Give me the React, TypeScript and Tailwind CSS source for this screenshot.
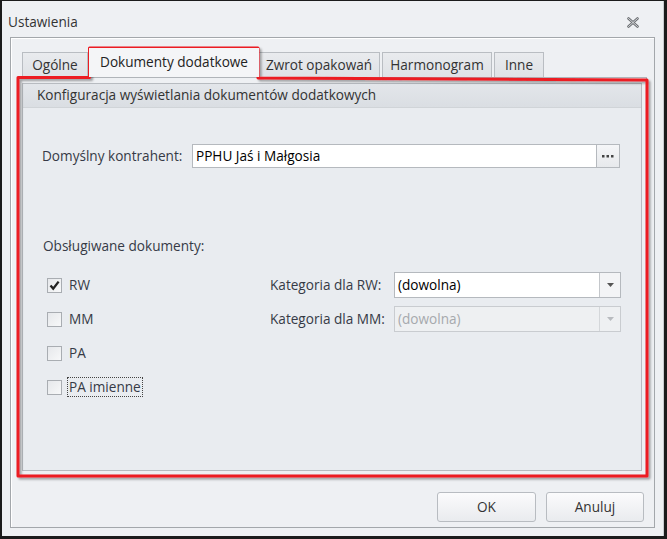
const FONT = { fontFamily: '"Open Sans", "Noto Sans", sans-serif' }

function Tab({ label, active, w }: { label: string; active?: boolean; w: string }) {
  if (active) {
    return (
      <div className={`${w} h-[29px] bg-[#f4f5f7] flex items-center justify-center text-[13.6px] text-[#222] -mx-[1px] z-10`}>
        {label}
      </div>
    )
  }
  return (
    <div className={`${w} h-[25px] mr-[2px] border border-b-0 border-[#b9bdc2] bg-gradient-to-b from-[#e9ebee] to-[#dfe2e6] flex items-center justify-center text-[13.6px] text-[#333]`}>
      {label}
    </div>
  )
}

function Check({ label, checked, focus }: { label: string; checked?: boolean; focus?: boolean }) {
  return (
    <div className="h-[34px] flex items-center pl-[24px]">
      <div className="w-[15px] h-[15px] border border-[#a9adb2] bg-gradient-to-br from-[#e6e8eb] to-[#f7f8f9] flex items-center justify-center">
        {checked && (
          <svg width="11" height="11" viewBox="0 0 11 11">
            <path d="M1.5 5.5 L4.2 8.6 L9.6 1.6" fill="none" stroke="#222" strokeWidth="2.3" />
          </svg>
        )}
      </div>
      <span className={`ml-[5px] text-[13.6px] text-[#363a46] leading-[18px] ${focus ? 'border border-dotted border-[#444] px-[1px]' : 'px-[2px]'}`}>
        {label}
      </span>
    </div>
  )
}

function Combo({ label, disabled }: { label: string; disabled?: boolean }) {
  return (
    <div className="h-[34px] flex items-center">
      <div className="w-[124px] text-[13.6px] text-[#363a46]">{label}</div>
      <div className={`w-[227px] h-[26px] border flex ${disabled ? 'border-[#c9ccd0] bg-[#eef0f2]' : 'border-[#b5b9be] bg-white'}`}>
        <div className={`flex-1 flex items-center pl-[3px] text-[13.6px] ${disabled ? 'text-[#a6a9ad]' : 'text-black'}`}>(dowolna)</div>
        <div className={`w-[21px] border-l flex items-center justify-center ${disabled ? 'border-[#d4d7da]' : 'border-[#c4c7cb] bg-[#f3f4f6]'}`}>
          <svg width="7" height="4" viewBox="0 0 7 4">
            <path d="M0 0 H7 L3.5 4 Z" fill={disabled ? '#b8bbbf' : '#555'} />
          </svg>
        </div>
      </div>
    </div>
  )
}

export default function App() {
  return (
    <div className="relative w-[667px] h-[539px] bg-[#1b1b1b] pt-[1px] pl-[2px] pr-[3px] pb-[3px]" style={FONT}>
      <div className="w-full h-full bg-[#eef0f3] border-r border-[#c8cbcf] flex flex-col">
        <div className="h-[36px] flex items-center justify-between pl-[6px] pr-[24px] pt-[6px]">
          <span className="text-[13.6px] text-[#333]">Ustawienia</span>
          <svg width="12" height="11" viewBox="0 0 12 11">
            <path d="M1.5 1.5 L10.5 9.5 M10.5 1.5 L1.5 9.5" stroke="#6b6e72" strokeWidth="2.6" strokeLinecap="round" />
            <path d="M1.5 1.5 L10.5 9.5 M10.5 1.5 L1.5 9.5" stroke="#eef0f3" strokeWidth="0.8" strokeLinecap="round" />
          </svg>
        </div>

        <div className="mx-[8px] mb-[8px] flex-1 border border-[#a3a7ab] shadow-[inset_1px_1px_0_#ffffff] flex flex-col px-[7px]">
          <div className="mt-[10px] h-[29px] flex items-end pl-[4px]">
            <Tab label="Ogólne" w="w-[66px]" />
            <Tab label="Dokumenty dodatkowe" w="w-[170px]" active />
            <Tab label="Zwrot opakowań" w="w-[122px]" />
            <Tab label="Harmonogram" w="w-[110px]" />
            <Tab label="Inne" w="w-[50px]" />
          </div>

          <div className="h-[400px] border border-[#b0b4b9] bg-[#eef0f3] pt-[5px] pl-[3px] pr-[4px] pb-[5px]">
            <div className="h-full border border-[#b7bbc0] bg-[#e9ecf0] flex flex-col">
              <div className="h-[24px] bg-gradient-to-b from-[#e3e6ea] to-[#dadee3] border-b border-[#d0d4d8] flex items-center pl-[14px] text-[13.6px] text-[#333]">
                Konfiguracja wyświetlania dokumentów dodatkowych
              </div>

              <div className="mt-[36px] h-[24px] flex items-center pl-[19px]">
                <div className="w-[150px] text-[13.6px] text-[#363a46]">Domyślny kontrahent:</div>
                <div className="w-[405px] h-full border border-[#b5b9be] bg-white flex items-center pl-[3px] text-[13.6px] text-black">
                  PPHU Jaś i Małgosia
                </div>
                <div className="w-[23px] h-full border border-l-0 border-[#b5b9be] bg-gradient-to-b from-[#f5f6f8] to-[#e7e9ec] flex items-center justify-center">
                  <svg width="12" height="3" viewBox="0 0 12 3">
                    <rect x="0" y="0" width="2.5" height="2.5" fill="#444" />
                    <rect x="4.5" y="0" width="2.5" height="2.5" fill="#444" />
                    <rect x="9" y="0" width="2.5" height="2.5" fill="#444" />
                  </svg>
                </div>
              </div>

              <div className="mt-[69px] pl-[20px] text-[13.6px] text-[#363a46] leading-[18px]">Obsługiwane dokumenty:</div>

              <div className="mt-[13px] flex">
                <div className="w-[247px] flex flex-col">
                  <Check label="RW" checked />
                  <Check label="MM" />
                  <Check label="PA" />
                  <Check label="PA imienne" focus />
                </div>
                <div className="flex flex-col">
                  <Combo label="Kategoria dla RW:" />
                  <Combo label="Kategoria dla MM:" disabled />
                </div>
              </div>
            </div>
          </div>

          <div className="mt-[15px] flex justify-end gap-[10px] pr-[3px]">
            <button className="w-[99px] h-[30px] rounded-[3px] border border-[#b8bcc1] bg-gradient-to-b from-[#fbfbfc] to-[#e9ebee] text-[13.6px] text-[#333]">OK</button>
            <button className="w-[98px] h-[30px] rounded-[3px] border border-[#b8bcc1] bg-gradient-to-b from-[#fbfbfc] to-[#e9ebee] text-[13.6px] text-[#333]">Anuluj</button>
          </div>
        </div>
      </div>

      <svg className="absolute inset-0 pointer-events-none" width="667" height="539" viewBox="0 0 667 539">
        <defs>
          <filter id="sh" x="-5%" y="-5%" width="110%" height="110%">
            <feDropShadow dx="2" dy="2" stdDeviation="1" floodColor="#000" floodOpacity="0.35" />
          </filter>
        </defs>
        <path
          d="M18 77.5 H89.5 V48 H258 V78 L647 80 V476 H18 Z"
          fill="none"
          stroke="#ec1c24"
          strokeWidth="3"
          strokeLinejoin="round"
          filter="url(#sh)"
        />
      </svg>
    </div>
  )
}
